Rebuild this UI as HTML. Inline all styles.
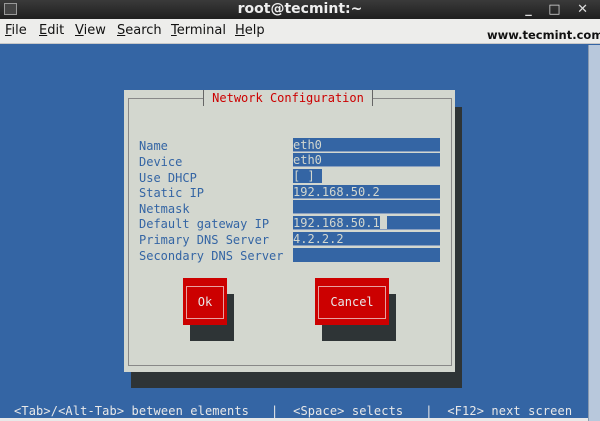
<!DOCTYPE html>
<html><head><style>
*{margin:0;padding:0;box-sizing:border-box}
body{width:600px;height:421px;overflow:hidden;background:#3465a4;position:relative;font-family:"DejaVu Sans Mono","Liberation Mono",monospace;font-size:12px}
.a{position:absolute}
#title{left:0;top:0;width:600px;height:19px;background:linear-gradient(#3a3a3a,#1f1f1f);color:#eee;font:bold 14px "DejaVu Sans",sans-serif;text-align:center;line-height:19px}
#menu{left:0;top:19px;width:600px;height:25px;background:#ededeb;border-bottom:1px solid #c8c8c8;font:13px "DejaVu Sans",sans-serif;color:#111}
#menu span{position:absolute;top:4px}
#menu u{text-decoration:underline}
.lbl{color:#3465a4;left:139px;line-height:16px}
.fld{left:293px;width:147px;height:14px;background:#3465a4;color:#d3d7cf;line-height:14px;border-bottom:1px solid #8aa0c0}
.sh{background:#2e3436}
.btn{background:#cc0000;color:#e8e8e8;text-align:center}
.btn div{position:absolute;border:1px solid #e8a0a0;left:3px;right:3px;top:8px;bottom:6px;line-height:31px}
</style></head><body>
<div class="a" id="title">root@tecmint:~</div>
<div class="a" style="left:4px;top:3px;width:13px;height:12px;border:1px solid #999;background:#444"></div>
<div class="a" style="right:6px;top:0;color:#ddd;font:bold 13px 'DejaVu Sans',sans-serif;line-height:19px;letter-spacing:6px">_ □ ✕</div>
<div class="a" id="menu">
<span style="left:5px"><u>F</u>ile</span><span style="left:39px"><u>E</u>dit</span><span style="left:75px"><u>V</u>iew</span><span style="left:117px"><u>S</u>earch</span><span style="left:171px"><u>T</u>erminal</span><span style="left:235px"><u>H</u>elp</span>
<span style="left:487px;top:9px;font-weight:bold;font-size:11.5px">www.tecmint.com</span>
</div>
<div class="a" style="left:588px;top:45px;width:12px;height:376px;background:#b8c8dc;border-left:1px solid #8a9ab0"></div>
<div class="a" style="left:0;top:418px;width:588px;height:3px;background:#e8e8e8"></div>

<div class="a sh" style="left:131px;top:107px;width:331px;height:281px"></div>
<div class="a" style="left:124px;top:90px;width:331px;height:282px;background:#d3d7cf"></div>
<div class="a" style="left:128px;top:98px;width:324px;height:268px;border:1px solid #888"></div>
<div class="a" style="left:203px;top:90px;width:170px;height:16px;background:#d3d7cf;color:#cc0000;text-align:center;line-height:16px;border-left:1px solid #666;border-right:1px solid #666">Network Configuration</div>

<div class="a lbl" style="top:138px">Name</div>
<div class="a lbl" style="top:154px">Device</div>
<div class="a lbl" style="top:170px">Use DHCP</div>
<div class="a lbl" style="top:185px">Static IP</div>
<div class="a lbl" style="top:201px">Netmask</div>
<div class="a lbl" style="top:216px">Default gateway IP</div>
<div class="a lbl" style="top:232px">Primary DNS Server</div>
<div class="a lbl" style="top:248px">Secondary DNS Server</div>

<div class="a fld" style="top:138px">eth0</div>
<div class="a fld" style="top:153px">eth0</div>
<div class="a fld" style="top:169px;width:29px;border:0">[ ]</div>
<div class="a fld" style="top:185px">192.168.50.2</div>
<div class="a fld" style="top:200px"></div>
<div class="a fld" style="top:216px">192.168.50.1<span style="background:#d3d7cf;display:inline-block;width:7px;height:13px;vertical-align:top"></span></div>
<div class="a fld" style="top:232px">4.2.2.2</div>
<div class="a fld" style="top:248px;border:0"></div>

<div class="a sh" style="left:190px;top:294px;width:44px;height:47px"></div>
<div class="a btn" style="left:183px;top:278px;width:44px;height:47px"><div>Ok</div></div>
<div class="a sh" style="left:322px;top:294px;width:74px;height:47px"></div>
<div class="a btn" style="left:315px;top:278px;width:74px;height:47px"><div>Cancel</div></div>

<div class="a" style="left:14px;top:403px;color:#e8e8e8;white-space:pre;line-height:16px;letter-spacing:0.12px">&lt;Tab&gt;/&lt;Alt-Tab&gt; between elements   |  &lt;Space&gt; selects   |  &lt;F12&gt; next screen</div>
</body></html>
